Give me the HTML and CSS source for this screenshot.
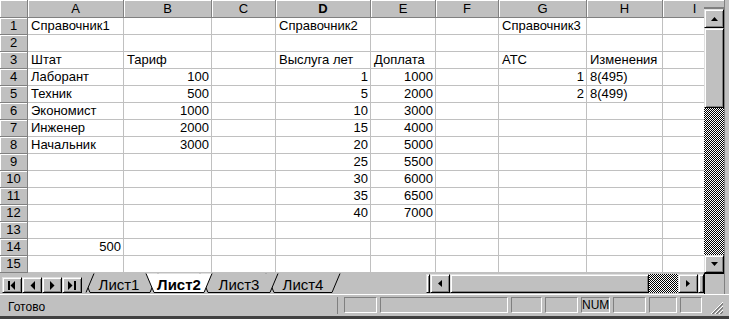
FILE: index.html
```html
<!DOCTYPE html>
<html>
<head>
  <meta charset="UTF-8">
  <title>Справочники</title>
  <link rel="stylesheet" href="styles.css">
</head>
<body>
  <div class="excel">
    <div class="sheet-row">
      <div class="grid" id="grid"></div>
      <div class="vscroll">
        <div class="split-box"></div>
        <div class="btn vbtn">
          <svg width="7" height="4" viewBox="0 0 7 4"><polygon points="3.5,0 7,4 0,4" fill="#000"/></svg>
        </div>
        <div class="btn vthumb"></div>
        <div class="track"></div>
        <div class="btn vbtn">
          <svg width="7" height="4" viewBox="0 0 7 4"><polygon points="0,0 7,0 3.5,4" fill="#000"/></svg>
        </div>
      </div>
      <div class="frame"></div>
    </div>

    <div class="tab-row">
      <div class="tab-nav">
        <div class="btn nav-btn">
          <svg width="8" height="9" viewBox="0 0 8 9"><rect x="0" y="0" width="2" height="9" fill="#000"/><polygon points="7,0 7,9 2.5,4.5" fill="#000"/></svg>
        </div>
        <div class="btn nav-btn">
          <svg width="5" height="9" viewBox="0 0 5 9"><polygon points="5,0 5,9 0.5,4.5" fill="#000"/></svg>
        </div>
        <div class="btn nav-btn">
          <svg width="5" height="9" viewBox="0 0 5 9"><polygon points="0,0 0,9 4.5,4.5" fill="#000"/></svg>
        </div>
        <div class="btn nav-btn">
          <svg width="8" height="9" viewBox="0 0 8 9"><polygon points="0,0 0,9 4.5,4.5" fill="#000"/><rect x="6" y="0" width="2" height="9" fill="#000"/></svg>
        </div>
      </div>
      <svg class="tabs" width="344" height="21" viewBox="0 0 344 21">
        <polygon points="184,0.5 258,0.5 250,19.5 192,19.5" fill="#c0c0c0"/>
        <polyline points="184,0.5 192,19.5 250,19.5 258,0.5" fill="none" stroke="#000"/>
        <text x="221" y="17" class="tab-label">Лист4</text>

        <polygon points="118,0.5 196,0.5 188,19.5 126,19.5" fill="#c0c0c0"/>
        <polyline points="118,0.5 126,19.5 188,19.5 196,0.5" fill="none" stroke="#000"/>
        <text x="157" y="17" class="tab-label">Лист3</text>

        <polygon points="0,0.5 76,0.5 68,19.5 8,19.5" fill="#c0c0c0"/>
        <polyline points="0,0.5 8,19.5 68,19.5 76,0.5" fill="none" stroke="#000"/>
        <text x="37" y="17" class="tab-label">Лист1</text>

        <polygon points="-2,0 12,0.5 4,19.5 -2,19.5" fill="#c0c0c0"/>
        <line x1="4" y1="19.5" x2="12" y2="0.5" stroke="#000"/>

        <polygon points="64,0.5 130,0.5 122,19.5 72,19.5" fill="#fff"/>
        <polyline points="64,0.5 72,19.5 122,19.5 130,0.5" fill="none" stroke="#000"/>
        <text x="97" y="17" class="tab-label tab-active">Лист2</text>
      </svg>
      <div class="btn h-split"></div>
      <div class="hscroll">
        <div class="btn hbtn">
          <svg width="4" height="7" viewBox="0 0 4 7"><polygon points="4,0 4,7 0,3.5" fill="#000"/></svg>
        </div>
        <div class="btn hthumb"></div>
        <div class="track htrack"></div>
        <div class="btn hbtn">
          <svg width="4" height="7" viewBox="0 0 4 7"><polygon points="0,0 0,7 4,3.5" fill="#000"/></svg>
        </div>
        <div class="btn h-box"></div>
      </div>
      <div class="corner"></div>
      <div class="frame"></div>
    </div>

    <div class="status">
      <div class="status-text">Готово</div>
      <div class="panel" style="width:33px"></div>
      <div class="panel" style="width:128px"></div>
      <div class="panel" style="width:31px"></div>
      <div class="panel" style="width:33px"></div>
      <div class="panel" style="width:29px">NUM</div>
      <div class="panel" style="width:33px"></div>
      <div class="panel" style="width:28px"></div>
      <div class="panel" style="width:22px"></div>
      <svg class="grip" width="14" height="14" viewBox="0 0 14 14">
        <line x1="13" y1="1" x2="1" y2="13" stroke="#fff"/>
        <line x1="13" y1="2" x2="2" y2="13" stroke="#808080"/>
        <line x1="13" y1="3" x2="3" y2="13" stroke="#808080"/>
        <line x1="13" y1="5" x2="5" y2="13" stroke="#fff"/>
        <line x1="13" y1="6" x2="6" y2="13" stroke="#808080"/>
        <line x1="13" y1="7" x2="7" y2="13" stroke="#808080"/>
        <line x1="13" y1="9" x2="9" y2="13" stroke="#fff"/>
        <line x1="13" y1="10" x2="10" y2="13" stroke="#808080"/>
        <line x1="13" y1="11" x2="11" y2="13" stroke="#808080"/>
      </svg>
    </div>
  </div>

  <script>
    const grid = document.getElementById('grid');
    const colNames = ['A', 'B', 'C', 'D', 'E', 'F', 'G', 'H', 'I'];
    const activeCol = 'D';

    const data = {
      1: { A: 'Справочник1', D: 'Справочник2', G: 'Справочник3' },
      3: { A: 'Штат', B: 'Тариф', D: 'Выслуга лет', E: 'Доплата', G: 'АТС', H: 'Изменения' },
      4: { A: 'Лаборант', B: 100, D: 1, E: 1000, G: 1, H: '8(495)' },
      5: { A: 'Техник', B: 500, D: 5, E: 2000, G: 2, H: '8(499)' },
      6: { A: 'Экономист', B: 1000, D: 10, E: 3000 },
      7: { A: 'Инженер', B: 2000, D: 15, E: 4000 },
      8: { A: 'Начальник', B: 3000, D: 20, E: 5000 },
      9: { D: 25, E: 5500 },
      10: { D: 30, E: 6000 },
      11: { D: 35, E: 6500 },
      12: { D: 40, E: 7000 },
      14: { A: 500 }
    };

    function addCell(cls, text) {
      const div = document.createElement('div');
      div.className = cls;
      if (text !== undefined) div.textContent = text;
      grid.appendChild(div);
    }

    // header row
    addCell('cell head corner-cell');
    colNames.forEach(name => {
      addCell('cell head col-head' + (name === activeCol ? ' active-col' : ''), name);
    });

    for (let r = 1; r <= 15; r++) {
      addCell('cell head row-head', r);
      const row = data[r] || {};
      colNames.forEach(name => {
        const value = row[name];
        addCell(typeof value === 'number' ? 'cell num' : 'cell', value);
      });
    }
  </script>
</body>
</html>
```

FILE: styles.css
```css
* {
  box-sizing: border-box;
}
body {
  margin: 0;
  background: #c0c0c0;
  font-family: "Liberation Sans", Arial, sans-serif;
  color: #000;
}
.excel {
  width: 729px;
  height: 319px;
  display: flex;
  flex-direction: column;
  overflow: hidden;
}

/* sheet */
.sheet-row {
  display: flex;
  height: 273px;
}
.grid {
  width: 704px;
  height: 273px;
  overflow: hidden;
  display: grid;
  grid-template-columns: 28px 96px 88px 64px 95px 65px 63px 88px 76px 64px;
  grid-template-rows: 18px repeat(15, 17px);
  background: #fff;
  font-size: 13px;
}
.cell {
  border-right: 1px solid #c0c0c0;
  border-bottom: 1px solid #c0c0c0;
  padding: 0 2px 0 3px;
  line-height: 16px;
  white-space: nowrap;
}
.cell.num {
  text-align: right;
}
.head {
  background: #c0c0c0;
  border-right-color: #808080;
  border-bottom-color: #808080;
  box-shadow: inset 1px 1px 0 #fff;
  text-align: center;
  padding: 0;
}
.col-head {
  line-height: 18px;
}
.active-col {
  font-weight: bold;
}

/* win98 style bevel */
.btn {
  background: #c0c0c0;
  border: 1px solid;
  border-color: #dfdfdf #000 #000 #dfdfdf;
  box-shadow: inset 1px 1px 0 #fff, inset -1px -1px 0 #808080;
  display: flex;
  align-items: center;
  justify-content: center;
}
.track {
  background: repeating-conic-gradient(#000 0 25%, #fff 0 50%) 0 0 / 2px 2px;
}

/* vertical scrollbar */
.vscroll {
  width: 20px;
  display: flex;
  flex-direction: column;
}
.split-box {
  height: 9px;
  border-top: 1px solid #fff;
  border-bottom: 2px solid #808080;
}
.vbtn {
  height: 19px;
}
.vbtn:last-child {
  height: 18px;
}
.vthumb {
  height: 80px;
}
.vscroll .track {
  flex: 1;
}
.frame {
  width: 5px;
  border-left: 1px solid #808080;
}

/* sheet tabs + horizontal scrollbar */
.tab-row {
  display: flex;
  height: 21px;
}
.tab-nav {
  width: 82px;
  display: flex;
  padding: 4px 0 0 2px;
}
.nav-btn {
  width: 20px;
  height: 16px;
}
.tabs {
  display: block;
}
.tab-label {
  font-family: "Liberation Sans", Arial, sans-serif;
  font-size: 15px;
  text-anchor: middle;
  fill: #000;
}
.tab-active {
  font-weight: bold;
}
.h-split {
  width: 4px;
  height: 19px;
  margin-top: 1px;
}
.hscroll {
  width: 274px;
  display: flex;
  padding-top: 1px;
}
.hscroll > div {
  height: 19px;
}
.hbtn {
  width: 20px;
}
.hthumb {
  width: 199px;
}
.htrack {
  width: 29px;
}
.h-box {
  width: 6px;
}
.corner {
  width: 20px;
  border-top: 1px solid #000;
  border-left: 1px solid #000;
}

/* status bar */
.status {
  height: 25px;
  display: flex;
  gap: 3px;
  padding-top: 2px;
  border-top: 1px solid #fff;
  border-bottom: 3px solid #404040;
  font-size: 12px;
}
.status-text {
  width: 338px;
  height: 17px;
  padding: 3px 0 0 8px;
  border-right: 1px solid #808080;
  margin-right: 3px;
}
.panel {
  height: 16px;
  border: 1px solid;
  border-color: #808080 #fff #fff #808080;
  line-height: 14px;
  text-align: center;
}
.grip {
  margin: 4px 0 0 5px;
}
```
